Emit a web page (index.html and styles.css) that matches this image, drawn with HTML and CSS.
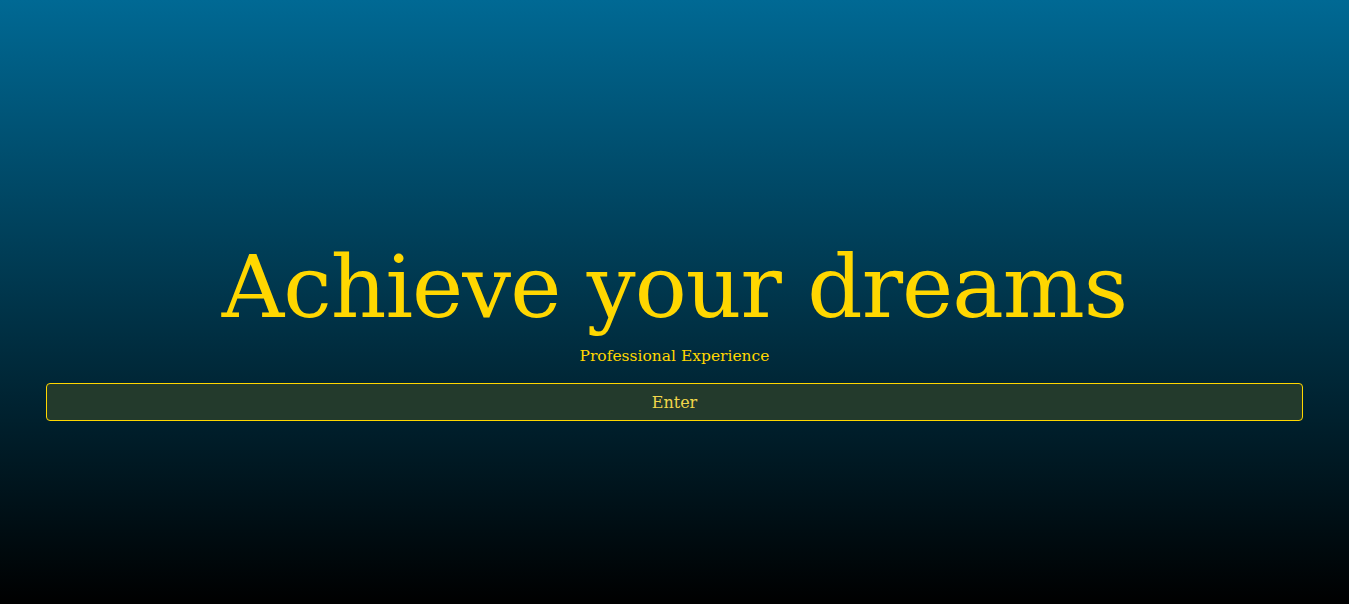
FILE: index.html
```html
<!DOCTYPE html>
<html lang="en">
<head>
<meta charset="utf-8">
<title>Achieve your dreams</title>
<link rel="stylesheet" href="styles.css">
</head>
<body>
<main class="hero">
  <h1 class="hero-title">Achieve your dreams</h1>
  <p class="hero-sub">Professional Experience</p>
  <button class="hero-btn" type="button">Enter</button>
</main>
</body>
</html>
```

FILE: styles.css
```css
html, body {
  margin: 0;
  padding: 0;
  height: 100%;
}
body {
  background: linear-gradient(to bottom, #006994 0%, #000000 100%);
  font-family: "DejaVu Serif", "Liberation Serif", serif;
  color: #ffd700;
}
.hero {
  box-sizing: border-box;
  height: 604px;
  display: flex;
  flex-direction: column;
  align-items: center;
  padding: 232px 46px 0;
}
.hero-title {
  margin: 0;
  font-weight: 400;
  font-size: 86.5px;
  line-height: 110px;
  letter-spacing: -1px;
}
.hero-sub {
  margin: 3px 0 0;
  font-size: 15.5px;
  line-height: 22px;
}
.hero-btn {
  margin-top: 16px;
  width: 100%;
  height: 38px;
  box-sizing: border-box;
  background: #233a2c;
  border: 1px solid #ffd700;
  border-radius: 4px;
  color: #f1d64a;
  font-family: inherit;
  font-size: 16px;
}
```
